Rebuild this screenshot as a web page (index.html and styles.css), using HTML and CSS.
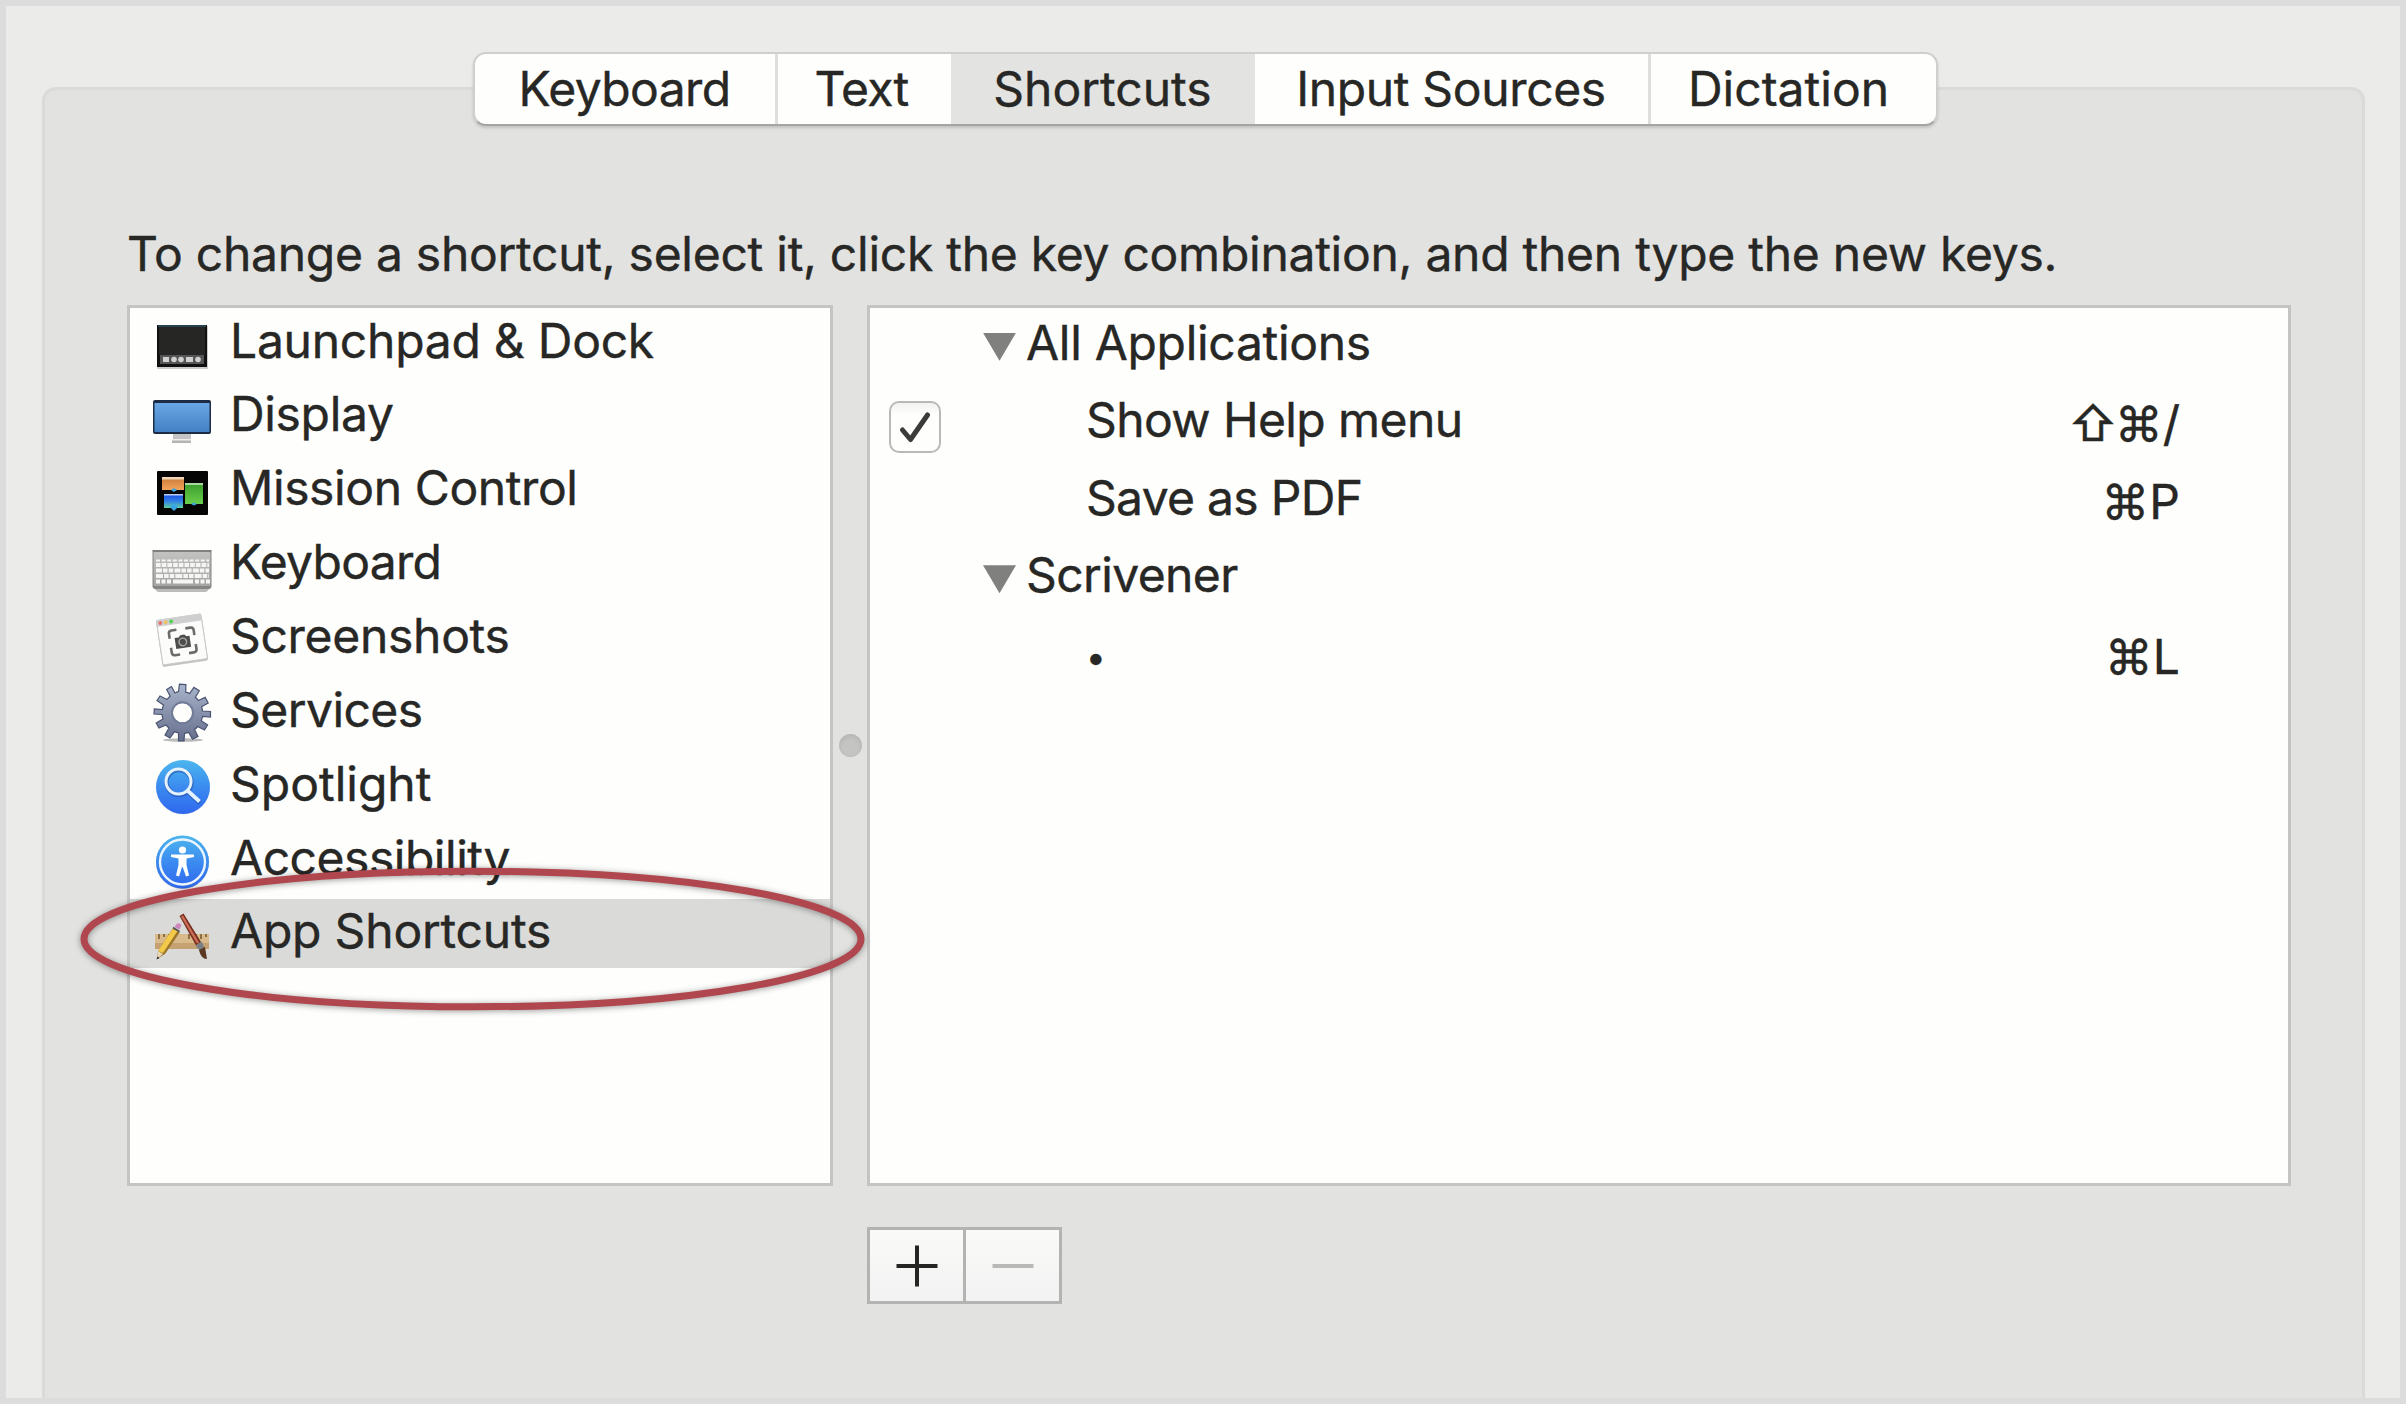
FILE: index.html
```html
<!DOCTYPE html>
<html lang="en">
<head>
<meta charset="utf-8">
<title>Keyboard Preferences</title>
<link rel="stylesheet" href="styles.css">
</head>
<body>
<main class="window">
  <nav class="tabs">
    <span class="tab tab-keyboard">Keyboard</span>
    <span class="tab tab-text">Text</span>
    <span class="tab tab-shortcuts selected">Shortcuts</span>
    <span class="tab tab-sources">Input Sources</span>
    <span class="tab tab-dictation">Dictation</span>
  </nav>
  <section class="pane">
    <p class="hint">To change a shortcut, select it, click the key combination, and then type the new keys.</p>
    <div class="split">
      <ul class="list categories">
        <li class="category">
          <svg class="icon" viewBox="0 0 60 60"><rect x="5" y="9" width="51" height="43" rx="1" fill="#999" opacity=".5"/><rect x="5" y="8" width="50" height="42" fill="#111"/><rect x="6" y="8" width="48" height="2" fill="#27414e"/><rect x="7" y="10" width="46" height="28" fill="#262624"/><rect x="8" y="38" width="44" height="9" fill="#555"/><g fill="#d0d0d0"><rect x="11" y="40" width="6" height="5"/><circle cx="22" cy="42.500" r="2.800"/><circle cx="29" cy="42.500" r="2.800"/><rect x="34" y="40" width="7" height="5"/><circle cx="46" cy="42.500" r="2.800"/></g></svg>
          <span class="name n1">Launchpad &amp; Dock</span>
        </li>
        <li class="category">
          <svg class="icon" viewBox="0 0 60 60"><defs><linearGradient id="screen" x2="0" y2="1"><stop stop-color="#69a6e5"/><stop offset="1" stop-color="#4381c4"/></linearGradient></defs><rect x="21" y="43" width="18" height="6" fill="#c4c4c4"/><rect x="20" y="49" width="19" height="4" fill="#b4b4b4"/><rect x="20" y="49" width="19" height="1.500" fill="#eee"/><rect x="1" y="10" width="58" height="34" rx="2" fill="#1d2b44"/><rect x="2.500" y="13" width="55" height="29" fill="url(#screen)"/></svg>
          <span class="name n2">Display</span>
        </li>
        <li class="category">
          <svg class="icon" viewBox="0 0 60 60"><defs><linearGradient id="or" x2="0" y2="1"><stop stop-color="#c87938"/><stop offset="1" stop-color="#f3a45c"/></linearGradient><linearGradient id="bl" x2="0" y2="1"><stop stop-color="#1c4be0"/><stop offset=".5" stop-color="#2f7ee8"/><stop offset="1" stop-color="#5fd09a"/></linearGradient><linearGradient id="gr" x2="0" y2="1"><stop stop-color="#379a2a"/><stop offset="1" stop-color="#6ad04c"/></linearGradient></defs><rect x="5" y="7" width="51" height="44" rx="1" fill="#050505"/><rect x="10" y="13" width="22" height="13" fill="url(#or)"/><rect x="10" y="13" width="22" height="2.500" fill="#f0d5b8"/><rect x="12" y="30" width="19" height="14" fill="url(#bl)"/><rect x="12" y="30" width="19" height="1.500" fill="#b8cdf5"/><rect x="33" y="19" width="18" height="21" fill="url(#gr)"/><rect x="33" y="19" width="18" height="2" fill="#a9d8a0"/><path d="M19 26l3-2 3 2-3 2zM39 40l3-1.500 3 1.500-3 1.500zM18 43l4-4 4 4-4 4z" fill="#3aa6e4"/></svg>
          <span class="name n3">Mission Control</span>
        </li>
        <li class="category">
          <svg class="icon icon-keyboard" viewBox="0 0 60 60"><defs><linearGradient id="kb" x2="0" y2="1"><stop stop-color="#c2c2c0"/><stop offset="1" stop-color="#a4a4a2"/></linearGradient></defs><path d="M2 47h56q-2 5-5 5H7q-3 0-5-5z" fill="#bbb"/><rect x=".5" y="10" width="59" height="39" rx="3" fill="#858583"/><rect x="1.500" y="12" width="57" height="34" rx="1" fill="url(#kb)"/><rect x=".5" y="10" width="59" height="2" fill="#80807e"/><g stroke="#f5f5f3" fill="none"><path d="M4 20.500h53" stroke-width="2.200" stroke-dasharray="4 1.600"/><path d="M4 25h53" stroke-width="3.800" stroke-dasharray="4.600 1.100"/><path d="M4 30.500h53" stroke-width="3.800" stroke-dasharray="6 1 4.500 1.200 4.500 1.200"/><path d="M4 36h53" stroke-width="3.800" stroke-dasharray="7 1.100 4.500 1.100 4.500 1.100"/><path d="M4 41.500h4m1.500 0h4m1.500 0h4m2 0h20m2 0h4m1.500 0h4m1.500 0h4" stroke-width="3.800"/></g></svg>
          <span class="name n4">Keyboard</span>
        </li>
        <li class="category">
          <svg class="icon icon-screenshots" viewBox="0 0 60 60"><g transform="rotate(-8.500 30 30)"><rect x="7" y="8" width="46" height="46" rx="2" fill="#aaa" opacity=".7"/><rect x="7.500" y="7" width="45" height="45" rx="1.500" fill="#fcfcfa" stroke="#c9c9c7"/><rect x="7.500" y="6.500" width="45" height="7" rx="1" fill="#cfcfcf"/><circle cx="11" cy="10" r="1.900" fill="#e9716a"/><circle cx="16.500" cy="10" r="1.900" fill="#efc15e"/><circle cx="22" cy="10" r="2" fill="#55d15a"/><path d="M18 27v-5q0-3 3-3h5M35 19h5q3 0 3 3v5M43 36v5q0 3-3 3h-5M26 44h-5q-3 0-3-3v-5" fill="none" stroke="#6c6c6a" stroke-width="2.600"/><path d="M23 27h4l2-2h4l2 2h3v11H23z" fill="#4d4d4b"/><circle cx="30.500" cy="32" r="3.800" fill="none" stroke="#aaa" stroke-width="1.400"/></g></svg>
          <span class="name n5">Screenshots</span>
        </li>
        <li class="category">
          <svg class="icon icon-services" viewBox="0 0 60 60"><defs><linearGradient id="gear" x2="0" y2="1"><stop stop-color="#a9b5cb"/><stop offset="1" stop-color="#666e8c"/></linearGradient></defs><ellipse cx="31" cy="57" rx="20" ry="1.800" fill="#bbb"/><g fill="url(#gear)" stroke="#4b5573" stroke-width="1.200"><path fill-rule="evenodd" d="M26.500 8.700L27.400 1.200L33.900 1.600L33.700 9.200A21 21 0 0 1 37.600 10.600L41.900 4.400L47.300 7.800L43.400 14.200A21 21 0 0 1 46.300 17.500L53.200 14.400L56.200 20L49.600 23.700A21 21 0 0 1 50.500 28L58.500 28.500L58.500 34L50.500 33.500A21 21 0 0 1 49.200 37.800L55.600 42L52.500 47L45.600 43.500A21 21 0 0 1 42.500 46.500L46 53.500L40.500 56.300L36.700 49.400A21 21 0 0 1 32.500 50.300L32 58H26.500L26.500 50A21 21 0 0 1 22.500 48.600L18 55L13 52L17 45A21 21 0 0 1 14 42L7 45L4.200 40L11 36A21 21 0 0 1 10 31.500L2 31L2.300 26L10.300 26.500A21 21 0 0 1 11.500 22L5 17.500L8 13L15 16.500A21 21 0 0 1 18.200 13.200L14.700 6.500L19.500 3.500L23 10A21 21 0 0 1 26.500 8.700ZM41 29.800A10.500 10.500 0 1 0 20 29.800A10.500 10.500 0 1 0 41 29.800Z"/></g><circle cx="30.500" cy="29.800" r="10.500" fill="none" stroke="#727d99" stroke-width="2"/></svg>
          <span class="name n6">Services</span>
        </li>
        <li class="category">
          <svg class="icon icon-round" viewBox="0 0 60 60"><defs><linearGradient id="sky" x2="0" y2="1"><stop stop-color="#4cb6ee"/><stop offset=".5" stop-color="#3b8bf0"/><stop offset="1" stop-color="#2f68ee"/></linearGradient></defs><circle cx="31" cy="31.500" r="27" fill="#9ab" opacity=".4"/><circle cx="31" cy="31" r="27" fill="url(#sky)"/><g fill="none" stroke="#234b9e" opacity=".5" stroke-width="4.500"><circle cx="27" cy="26.500" r="12.500"/><path d="M36 36l12 11"/></g><g fill="none" stroke="#e4f2fd" stroke-width="3"><circle cx="26.500" cy="25.500" r="12.500"/><path d="M35.500 34.500L47.500 45.500" stroke-width="3.800"/></g></svg>
          <span class="name n7">Spotlight</span>
        </li>
        <li class="category">
          <svg class="icon icon-round" viewBox="0 0 60 60"><circle cx="30.500" cy="32.500" r="26.500" fill="#678" opacity=".5"/><circle cx="30.500" cy="32" r="26.500" fill="url(#sky)"/><circle cx="30.500" cy="32" r="22.500" fill="none" stroke="#eaf5fd" stroke-width="2.400"/><circle cx="30.500" cy="20" r="3.600" fill="#fff"/><path d="M19 24.500L42 24.500V27L34.500 28.500V35L37 45.500L34 46.500L30.700 37H30L27 46.500L24 45.500L26.500 35V28.500L19 27Z" fill="#fff"/></svg>
          <span class="name n8">Accessibility</span>
        </li>
        <li class="category selected">
          <svg class="icon icon-apps" viewBox="0 0 60 60"><rect x="3" y="31" width="54" height="12" fill="#c6a273"/><rect x="3" y="28" width="54" height="9" fill="#d9bb8b"/><path d="M7 28v5M12 28v3M17 28v5M37 28v5M44 28v3M49 28v5M54 28v3" stroke="#76552f" stroke-width="1.500"/><path d="M27.500 10l4-2.500L49 36l-5 3.500z" fill="#7b2d1e"/><path d="M29 10.500l2-1L47 36.500l-2 1z" fill="#cb7058"/><path d="M43.500 39.500l6-4 3 6-5 3z" fill="#788086"/><path d="M47 44l6-3 2 12q-6 0-8-9z" fill="#5b3822"/><path d="M21 22l7 4L13 48l-8 5 1-8z" fill="#9b7528"/><path d="M20.500 23l5 2L11 47l-5-2z" fill="#f3c94a"/><path d="M6 45l5 3-6 5z" fill="#e8d6b8"/><path d="M4.500 53.500l1-3 2 1.500z" fill="#222"/><path d="M22.500 21l2-3q3-2 5 1l-2 4.500z" fill="#cf86bd"/><path d="M21 21.500l6.500 4" stroke="#555" stroke-width="1.500"/></svg>
          <span class="name n9">App Shortcuts</span>
        </li>
      </ul>
      <div class="divider"><span class="grip"></span></div>
      <div class="list shortcuts">
        <div class="row"><span class="check"></span><i class="disclosure"></i><span class="label g1">All Applications</span></div>
        <div class="row"><span class="check"><svg class="checkbox" viewBox="0 0 52 52"><defs><linearGradient id="box" x2="0" y2="1"><stop stop-color="#f1f1f0"/><stop offset=".25" stop-color="#fefefd"/></linearGradient></defs><rect x="1" y="1" width="50" height="50" rx="9" fill="url(#box)" stroke="#b9b9b7" stroke-width="2"/><path d="M13.500 29L21.500 38.500L38.500 14" fill="none" stroke="#3b3b39" stroke-width="5" stroke-linecap="round" stroke-linejoin="round"/></svg></span><span class="label item i1">Show Help menu</span><span class="keys"><span class="shift">⇧</span><span>⌘</span><span>/</span></span></div>
        <div class="row"><span class="check"></span><span class="label item i2">Save as PDF</span><span class="keys"><span>⌘</span><span>P</span></span></div>
        <div class="row"><span class="check"></span><i class="disclosure"></i><span class="label g2">Scrivener</span></div>
        <div class="row"><span class="check"></span><span class="item bullet">•</span><span class="keys"><span>⌘</span><span>L</span></span></div>
      </div>
    </div>
    <div class="actions">
      <span class="action"><svg viewBox="0 0 42 42"><path d="M21 0.500v41M0.500 21h41" stroke="#252523" stroke-width="4"/></svg></span>
      <span class="action"><svg viewBox="0 0 42 42"><path d="M0.500 21h41" stroke="#b9b9b7" stroke-width="4"/></svg></span>
    </div>
  </section>
  <svg class="ring" viewBox="0 0 800 160"><ellipse cx="399.500" cy="80" rx="388.500" ry="67.800" fill="none" stroke="#b0474f" stroke-width="7"/></svg>
</main>
</body>
</html>
```
FILE: styles.css
```css
* { box-sizing: border-box; }

body {
  margin: 0;
  font-family: Inter, "Liberation Sans", sans-serif;
  font-size: 48px;
  line-height: 60px;
  color: #272725;
  -webkit-text-stroke: .4px #272725;
  white-space: nowrap;
}

.window {
  position: relative;
  height: 1404px;
  border: 6px solid #dcdcdc;
  background: #ebebe9;
  padding: 46px 35px 0 36px;
  display: flex;
  flex-direction: column;
  align-items: center;
  overflow: hidden;
}

.tabs {
  position: relative;
  z-index: 1;
  flex: none;
  display: flex;
  width: 1465px;
  height: 74px;
  margin-left: 3px;
  background: #fefefc;
  border: 2px solid #cfcfcd;
  border-bottom-color: #a5a5a3;
  border-radius: 13px;
  box-shadow: 0 2px 3px rgba(0, 0, 0, .14);
}

.tab {
  display: flex;
  align-items: center;
  justify-content: center;
  border-left: 3px solid #dededc;
}

.tab-keyboard { width: 300px; border-left: 0; letter-spacing: -.6px; }
.tab-text { width: 176px; padding-right: 5px; letter-spacing: -.7px; }
.tab-shortcuts { width: 304px; }
.tab-sources { width: 393px; border-left: 0; letter-spacing: -.35px; }
.tab-dictation { flex: 1; padding-right: 9px; }
.tab.selected { background: #e3e3e1; border-left: 0; }

.pane {
  align-self: stretch;
  flex: 1;
  margin-top: -39px;
  background: #e2e2e0;
  border: 3px solid #dadad8;
  border-bottom: 0;
  border-radius: 14px 14px 0 0;
  padding: 134px 71px 0 82px;
}

.hint { margin: 0 0 21px; height: 60px; letter-spacing: -.265px; }

.split { display: flex; height: 881px; }

.list {
  margin: 0;
  list-style: none;
  background: #fefefc;
  border: 3px solid #c4c4c2;
}

.categories { width: 706px; padding: 0; }

.category {
  display: flex;
  align-items: center;
  height: 69px;
  margin-bottom: 4.870px;
  padding-left: 22px;
  gap: 18px;
}

.category.selected { background: #dadad8; }
.icon { width: 60px; height: 60px; flex: none; margin-top: 8px; }
.icon-keyboard { margin-top: 12px; }
.icon-screenshots { margin-top: 4px; }
.icon-services { margin-top: 2px; }
.icon-round { margin-top: 1px; }
.icon-apps { margin-top: 6px; }

.name { margin-top: -4px; }
.n1 { letter-spacing: -.25px; }
.n2 { letter-spacing: -.33px; }
.n3 { letter-spacing: -.4px; }
.n4 { letter-spacing: -.7px; }
.n5 { letter-spacing: -.3px; }
.n6 { letter-spacing: -.55px; }
.n8 { letter-spacing: -.47px; }
.n9 { letter-spacing: -.2px; }

.divider { width: 34px; display: flex; align-items: center; justify-content: center; }
.grip {
  width: 23px;
  height: 23px;
  border-radius: 50%;
  background: radial-gradient(circle at 50% 60%, #c4c4c2 40%, #aeaeac);
}

.shortcuts { flex: 1; }

.row { display: flex; align-items: center; height: 77.500px; padding-right: 108px; }
.check { width: 113px; padding-left: 19px; display: flex; }
.checkbox { width: 52px; height: 52px; margin-top: 5px; }

.disclosure {
  width: 33px;
  height: 28px;
  background: #80807e;
  clip-path: polygon(0 0, 100% 0, 50% 100%);
  margin-right: 10px;
}

.label { margin-top: -8px; }
.item { padding-left: 103px; }
.bullet { font-size: 35px; }
.g1 { letter-spacing: -.3px; }
.g2 { letter-spacing: -.6px; }
.i1 { letter-spacing: -.6px; }
.i2 { letter-spacing: -.7px; }

.keys { margin-left: auto; display: flex; }
.shift { margin-right: -3px; }

.actions {
  display: flex;
  width: 195px;
  height: 77px;
  margin: 41px 0 0 740px;
  border: 3px solid #b3b3b1;
  background: linear-gradient(#fafaf9, #f2f2f2);
}

.action { flex: 1; display: flex; align-items: center; justify-content: center; }
.action + .action { border-left: 3px solid #b3b3b1; }
.action svg { width: 42px; height: 42px; }

.ring {
  position: absolute;
  left: 67px;
  top: 853px;
  width: 800px;
  height: 160px;
  filter: drop-shadow(0 1px 3px rgba(0, 0, 0, .4));
}
```
